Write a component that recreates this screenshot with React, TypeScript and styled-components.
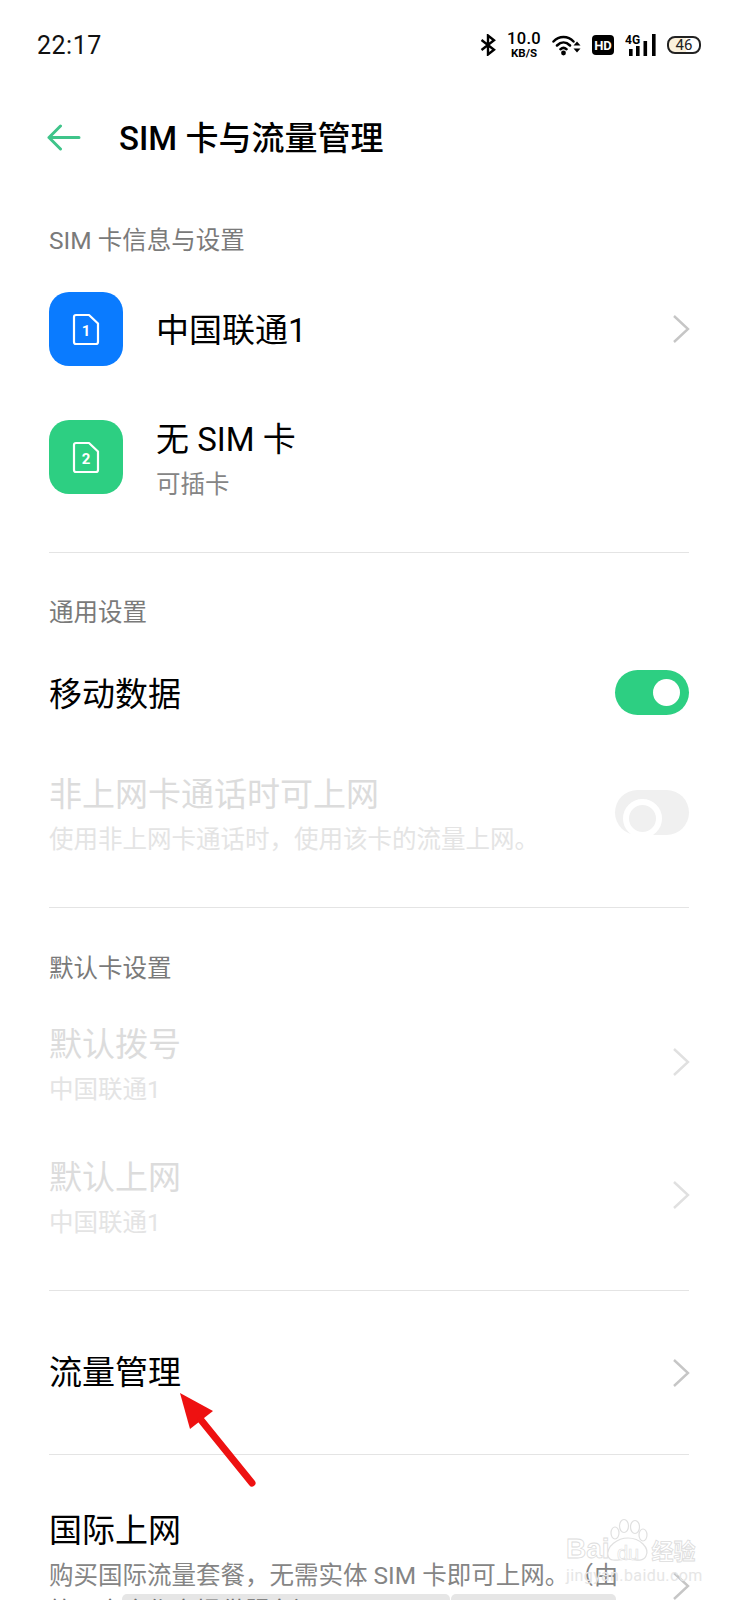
import styled, { createGlobalStyle } from 'styled-components';

const GlobalStyle = createGlobalStyle`
  html, body {
    margin: 0;
    padding: 0;
    background: #ffffff;
  }
  * {
    box-sizing: border-box;
  }
`;

const CJK = `"Roboto", "Noto Sans CJK SC", sans-serif`;

const Screen = styled.div`
  position: relative;
  width: 738px;
  height: 1600px;
  overflow: hidden;
  background: #ffffff;
  font-family: ${CJK};
  color: #000000;
  text-spacing-trim: space-all;
`;

const StatusBar = styled.div`
  display: flex;
  align-items: center;
  justify-content: space-between;
  height: 90px;
  padding: 0 37px;
`;

const Clock = styled.span`
  font-size: 25px;
  letter-spacing: 0.5px;
  color: #111111;
`;

const StatusIcons = styled.div`
  display: flex;
  align-items: center;
  gap: 11px;
`;

const NetSpeed = styled.div`
  display: flex;
  flex-direction: column;
  align-items: center;
  font-weight: 700;
  line-height: 1;
  span:first-child {
    font-size: 16.5px;
    font-weight: 500;
    letter-spacing: 0.3px;
  }
  span:last-child {
    font-size: 11.5px;
    margin-top: 1px;
  }
`;

const HdBadge = styled.span`
  display: flex;
  align-items: center;
  justify-content: center;
  width: 22px;
  height: 20px;
  border-radius: 4px;
  background: #000000;
  color: #ffffff;
  font-size: 13px;
  font-weight: 700;
`;

const Battery = styled.span`
  display: flex;
  align-items: center;
  justify-content: center;
  width: 34px;
  height: 18px;
  border: 2px solid #222222;
  border-radius: 8px;
  background: linear-gradient(90deg, #fbf1dc 0 58%, #ffffff 58%);
  font-size: 15px;
  line-height: 1;
  color: #222222;
`;

const Header = styled.header`
  display: flex;
  align-items: center;
  gap: 38px;
  height: 92px;
  padding-left: 47px;
  svg {
    margin-top: 3px;
  }
`;

const Title = styled.h1`
  margin: 0;
  font-size: 33px;
  font-weight: 500;
`;

const SectionLabel = styled.div<{ $top: number }>`
  display: flex;
  align-items: center;
  height: 34px;
  margin-top: ${(p) => p.$top}px;
  padding-left: 49px;
  font-size: 24.5px;
  color: #7a7a7a;
`;

const SimList = styled.div`
  margin-top: 10px;
`;

const RowLead = styled.div`
  display: flex;
  align-items: center;
  gap: 33px;
`;

const SimTile = styled.div<{ $color: string }>`
  display: flex;
  align-items: center;
  justify-content: center;
  flex-shrink: 0;
  width: 74px;
  height: 74px;
  border-radius: 20px;
  background: ${(p) => p.$color};
`;

const TextBlock = styled.div<{ $shift?: number }>`
  display: flex;
  flex-direction: column;
  padding-top: ${(p) => p.$shift ?? 0}px;
`;

const RowTitle = styled.div<{ $off?: boolean }>`
  font-size: 33px;
  line-height: 48px;
  color: ${(p) => (p.$off ? '#dcdcdc' : '#000000')};
`;

const RowSub = styled.div<{ $off?: boolean }>`
  font-size: 24.5px;
  line-height: 42px;
  color: ${(p) => (p.$off ? '#e4e4e4' : '#858585')};
  white-space: nowrap;
`;

const Divider = styled.div<{ $top?: number }>`
  height: 1px;
  margin: ${(p) => p.$top ?? 0}px 49px 0;
  background: #e4e4e4;
`;

const Row = styled.div<{ $height: number; $top?: number }>`
  display: flex;
  align-items: center;
  justify-content: space-between;
  height: ${(p) => p.$height}px;
  margin-top: ${(p) => p.$top ?? 0}px;
  padding: 0 48px 0 49px;
`;

const Toggle = styled.div<{ $on?: boolean }>`
  position: relative;
  width: 74px;
  height: 45px;
  margin-right: 1px;
  border-radius: 23px;
  background: ${(p) => (p.$on ? '#2dcf82' : '#f0f0f0')};
  &::after {
    content: '';
    position: absolute;
    top: 9px;
    left: ${(p) => (p.$on ? '38px' : '8px')};
    width: 27px;
    height: 27px;
    border-radius: 50%;
    background: ${(p) => (p.$on ? '#ffffff' : '#f0f0f0')};
    border: ${(p) => (p.$on ? 'none' : '6px solid #ffffff')};
  }
`;

const ClippedRow = styled.div`
  position: relative;
  display: flex;
  align-items: flex-start;
  justify-content: space-between;
  padding: 52px 48px 0 49px;
`;

const ChevronSlot = styled.div`
  margin-top: 64px;
`;

const CutLine = styled.div`
  position: relative;
  margin-top: -6px;
  font-size: 24.5px;
  line-height: 42px;
  color: #6f6f6f;
  white-space: nowrap;
`;

const RedactBar = styled.div<{ $left: number; $width: number }>`
  position: absolute;
  top: 1594px;
  left: ${(p) => p.$left}px;
  width: ${(p) => p.$width}px;
  height: 10px;
  border-radius: 5px 5px 0 0;
  background: #e6e6e6;
`;

const ArrowOverlay = styled.svg`
  position: absolute;
  left: 175px;
  top: 1385px;
`;

const Watermark = styled.div`
  position: absolute;
  left: 566px;
  top: 1518px;
  width: 136px;
  color: #e2e2e2;
`;

const WatermarkLine = styled.div`
  display: flex;
  align-items: flex-end;
  height: 45px;
`;

const OutlineText = styled.span<{ $size: number; $left?: number }>`
  margin-left: ${(p) => p.$left ?? 0}px;
  font-family: "Liberation Sans", "Noto Sans CJK SC", sans-serif;
  font-size: ${(p) => p.$size}px;
  font-weight: 700;
  line-height: 1;
  color: #ffffff;
  -webkit-text-stroke: 0.8px #dcdcdc;
`;

const PawMark = styled.svg`
  position: absolute;
  left: 36px;
  top: 0;
`;

const PawLetters = styled.span`
  position: absolute;
  left: 51px;
  top: 25px;
  font-family: "Liberation Sans", sans-serif;
  font-size: 20px;
  line-height: 1;
  color: #ffffff;
  -webkit-text-stroke: 0.6px #dedede;
`;

const WatermarkSub = styled.div`
  margin-top: 3px;
  font-size: 16px;
  line-height: 1.2;
  letter-spacing: 0.4px;
  white-space: nowrap;
  color: #e6e6e6;
`;

const Chevron = ({ off }: { off?: boolean }) => (
  <svg width="18" height="30" viewBox="0 0 18 30" fill="none">
    <path d="M2 2 L16 15 L2 28" stroke={off ? '#e0e0e0' : '#c6c6c6'} strokeWidth="2.4" />
  </svg>
);

const SimGlyph = ({ n, color }: { n: string; color: string }) => (
  <svg width="28" height="33" viewBox="0 0 28 33" fill="none">
    <path
      d="M4 2 H17 L26 10.5 V29 Q26 31 24 31 H4 Q2 31 2 29 V4 Q2 2 4 2 Z"
      stroke="#fff"
      strokeWidth="2.2"
      strokeLinejoin="round"
      fill={color}
    />
    <text x="14" y="22.5" textAnchor="middle" fontSize="15" fontWeight="700" fontFamily="Roboto, sans-serif" fill="#fff">
      {n}
    </text>
  </svg>
);

const BackArrow = () => (
  <svg width="34" height="27" viewBox="0 0 34 27" fill="none">
    <path d="M32 13.5 H2 M13.5 2 L2 13.5 L13.5 25" stroke="#3fc48a" strokeWidth="3" strokeLinecap="round" strokeLinejoin="round" />
  </svg>
);

const BluetoothMark = () => (
  <svg width="16" height="22" viewBox="0 0 16 22" fill="none">
    <path d="M1.5 6 L14 15.8 L8 20.5 V1.5 L14 6.2 L1.5 16" stroke="#000" strokeWidth="2.4" strokeLinejoin="miter" />
  </svg>
);

const Wifi = () => (
  <svg width="29" height="22" viewBox="0 0 29 22" fill="none">
    <path d="M1.5 7.5 C7 1.5 16 1.5 21.5 7.5 M5 11.5 C9 7.5 14 7.5 18 11.5 M8.5 15.2 C10.5 13.4 12.5 13.4 14.5 15.2" stroke="#000" strokeWidth="2.5" strokeLinecap="round" />
    <circle cx="11.5" cy="19" r="2.4" fill="#000" />
    <path d="M21.5 11.5 L25 7.5 L28.5 11.5 Z M21.5 14.5 L25 18.5 L28.5 14.5 Z" fill="#000" />
  </svg>
);

const Signal = () => (
  <svg width="31" height="22" viewBox="0 0 31 22">
    <text x="0" y="10" fontSize="12" fontWeight="700" fontFamily="Roboto, sans-serif" fill="#000">
      4G
    </text>
    <rect x="4" y="15" width="3.6" height="7" fill="#000" />
    <rect x="11" y="12" width="3.6" height="10" fill="#000" />
    <rect x="18.5" y="7" width="3.6" height="15" fill="#000" />
    <rect x="27" y="0" width="3.6" height="22" fill="#000" />
  </svg>
);

const App = () => (
  <Screen>
    <GlobalStyle />
    <StatusBar>
      <Clock>22:17</Clock>
      <StatusIcons>
        <BluetoothMark />
        <NetSpeed>
          <span>10.0</span>
          <span>KB/S</span>
        </NetSpeed>
        <Wifi />
        <HdBadge>HD</HdBadge>
        <Signal />
        <Battery>46</Battery>
      </StatusIcons>
    </StatusBar>
    <Header>
      <BackArrow />
      <Title>SIM 卡与流量管理</Title>
    </Header>
    <SectionLabel $top={39}>SIM 卡信息与设置</SectionLabel>
    <SimList>
      <Row $height={128}>
        <RowLead>
          <SimTile $color="#0a7bff">
            <SimGlyph n="1" color="#0a7bff" />
          </SimTile>
          <TextBlock $shift={4}>
            <RowTitle>中国联通1</RowTitle>
          </TextBlock>
        </RowLead>
        <Chevron />
      </Row>
      <Row $height={128}>
        <RowLead>
          <SimTile $color="#2dcf82">
            <SimGlyph n="2" color="#2dcf82" />
          </SimTile>
          <TextBlock $shift={8}>
            <RowTitle>无 SIM 卡</RowTitle>
            <RowSub>可插卡</RowSub>
          </TextBlock>
        </RowLead>
      </Row>
    </SimList>
    <Divider $top={31} />
    <SectionLabel $top={40}>通用设置</SectionLabel>
    <Row $height={130}>
      <TextBlock $shift={6}>
        <RowTitle>移动数据</RowTitle>
      </TextBlock>
      <Toggle $on />
    </Row>
    <Row $height={111}>
      <TextBlock $shift={6}>
        <RowTitle $off>非上网卡通话时可上网</RowTitle>
        <RowSub $off>使用非上网卡通话时，使用该卡的流量上网。</RowSub>
      </TextBlock>
      <Toggle />
    </Row>
    <Divider $top={39} />
    <SectionLabel $top={41}>默认卡设置</SectionLabel>
    <Row $height={133} $top={12}>
      <TextBlock $shift={9}>
        <RowTitle $off>默认拨号</RowTitle>
        <RowSub $off>中国联通1</RowSub>
      </TextBlock>
      <Chevron off />
    </Row>
    <Row $height={133}>
      <TextBlock $shift={9}>
        <RowTitle $off>默认上网</RowTitle>
        <RowSub $off>中国联通1</RowSub>
      </TextBlock>
      <Chevron off />
    </Row>
    <Divider $top={29} />
    <Row $height={163}>
      <RowTitle>流量管理</RowTitle>
      <Chevron />
    </Row>
    <Divider />
    <RedactBar $left={122} $width={328} />
    <RedactBar $left={451} $width={165} />
    <ClippedRow>
      <TextBlock>
        <RowTitle>国际上网</RowTitle>
        <RowSub>购买国际流量套餐，无需实体 SIM 卡即可上网。（由</RowSub>
        <CutLine>第三方合作商提供服务）</CutLine>
      </TextBlock>
      <ChevronSlot>
        <Chevron />
      </ChevronSlot>
    </ClippedRow>
    <ArrowOverlay width="90" height="110" viewBox="0 0 90 110" fill="none">
      <path d="M5 8 L38 26 L15 44 Z" fill="#ee1111" />
      <path d="M26 35 L77 98" stroke="#ee1111" strokeWidth="7" strokeLinecap="round" />
    </ArrowOverlay>
    <Watermark>
      <WatermarkLine>
        <OutlineText $size={28}>Bai</OutlineText>
        <OutlineText $size={22} $left={42}>经验</OutlineText>
      </WatermarkLine>
      <PawMark width="50" height="46" viewBox="0 0 50 46" fill="none" stroke="#e0e0e0" strokeWidth="1.2">
        <ellipse cx="13" cy="15" rx="4" ry="6" />
        <ellipse cx="22" cy="8" rx="4.5" ry="6.5" />
        <ellipse cx="33" cy="9" rx="4.5" ry="6.5" />
        <ellipse cx="41" cy="17" rx="4" ry="6" />
        <path d="M6 38 C4 28 16 20 26 20 C38 20 48 30 44 38 C41 45 30 41 25 41 C18 41 8 45 6 38 Z" fill="#fff" />
      </PawMark>
      <PawLetters>du</PawLetters>
      <WatermarkSub>jingyan.baidu.com</WatermarkSub>
    </Watermark>
  </Screen>
);

export default App;
